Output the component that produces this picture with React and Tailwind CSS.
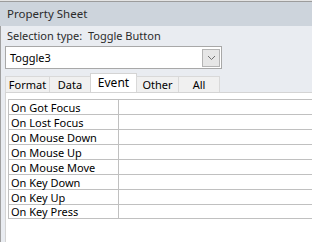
const tabs = [
  { label: "Format", w: "w-[45px]" },
  { label: "Data", w: "w-[42px]" },
  { label: "Event", w: "w-[47px]", active: true },
  { label: "Other", w: "w-[43px]" },
  { label: "All", w: "w-[42px]" },
];

const events = [
  "On Got Focus",
  "On Lost Focus",
  "On Mouse Down",
  "On Mouse Up",
  "On Mouse Move",
  "On Key Down",
  "On Key Up",
  "On Key Press",
];

export default function App() {
  return (
    <div
      className="flex h-[242px] w-[312px] flex-col overflow-hidden bg-[#e9ecf1] text-[11px] leading-[14px] text-[#1e1e1e]"
      style={{ fontFamily: '"Noto Sans", "Open Sans", sans-serif' }}
    >
      <div className="h-[1px] bg-[#e4e4e4]" />
      <div className="flex h-[25px] items-center border-t border-[#9c9c9c] bg-[#cdd4dc] pl-[7px] text-[11.5px] text-[#2b2b2b]">
        Property Sheet
      </div>

      <div className="flex flex-1 flex-col border-l border-[#a0a0a0]">
        <div className="flex h-[20px] items-center pl-[6px] text-[#2b2b2b]">
          Selection type:&nbsp;&nbsp;Toggle Button
        </div>

        <div className="ml-[4px] flex h-[23px] w-[217px] items-center border border-[#a8a8a8] bg-white pr-[1px]">
          <span className="flex-1 pl-[4px] text-black">Toggle3</span>
          <div className="flex h-[18px] w-[18px] items-center justify-center border border-[#b4b4b4] bg-[#e6e6e6]">
            <svg width="9" height="6" viewBox="0 0 9 6">
              <path d="M1 1 L4.5 4.5 L8 1" fill="none" stroke="#707070" strokeWidth="1" />
            </svg>
          </div>
        </div>

        <div className="mt-[4px] ml-[4px] flex h-[19px] items-end">
          {tabs.map((t) =>
            t.active ? (
              <div
                key={t.label}
                className={`${t.w} -ml-[1px] flex h-[20px] -mb-[1px] items-center justify-center border border-b-0 border-[#d4d4d4] bg-white pb-[2px] text-[12px] text-black`}
              >
                {t.label}
              </div>
            ) : (
              <div
                key={t.label}
                className={`${t.w} -ml-[1px] first:ml-0 flex h-[16px] items-center justify-center border border-b-0 border-[#d9d9d9] bg-[#f0f0f0] text-black`}
              >
                {t.label}
              </div>
            )
          )}
        </div>

        <div className="ml-[4px] flex-1 border-t border-l border-[#d4d4d4] bg-white pt-[6px] pl-[2px]">
          <div className="border-l border-[#c0c0c0]">
            {events.map((e, i) => (
              <div
                key={e}
                className={`flex h-[15px] border-t border-[#c0c0c0] ${i === events.length - 1 ? "border-b" : ""}`}
              >
                <div className="flex w-[110px] items-center border-r border-[#c0c0c0] pl-[2px] leading-[13px] text-black">
                  {e}
                </div>
                <div className="flex-1" />
              </div>
            ))}
          </div>
        </div>
      </div>
    </div>
  );
}
